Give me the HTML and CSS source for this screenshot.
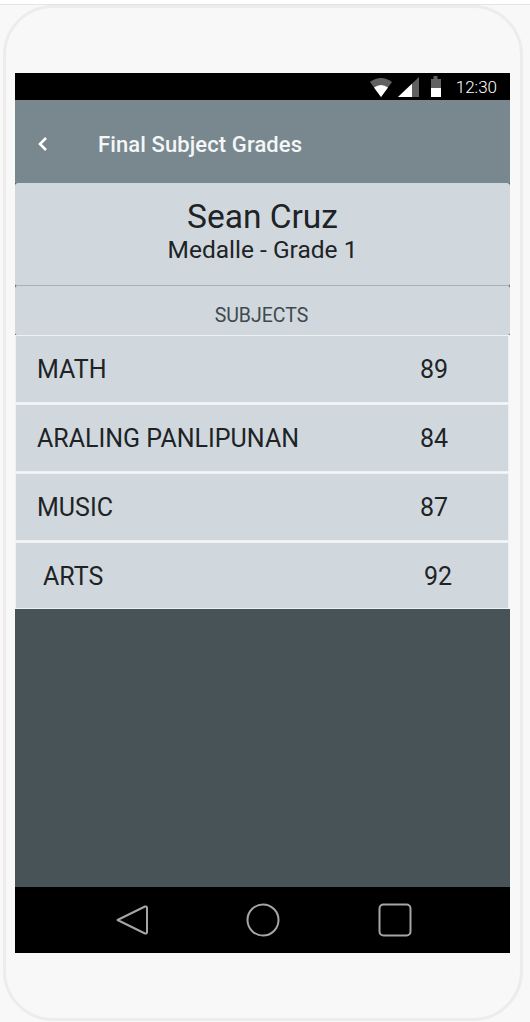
FILE: index.html
```html
<!DOCTYPE html>
<html lang="en">
<head>
	<meta charset="utf-8">
	<title>Final Subject Grades</title>
	<link rel="stylesheet" href="styles.css">
</head>
<body>

<div class="topline"></div>

<div class="phone">
	<div class="screen">
		<div class="statusbar">
			<svg class="status-icons" width="71" height="23" viewBox="0 -2 71 23">
				<!-- wifi -->
				<path d="M0 5 Q11 -3 22 5 L11 20 Z" fill="#fff" opacity="0.38"/>
				<path d="M4 10.500 Q11 5.500 18 10.500 L11 20 Z" fill="#fff"/>
				<!-- signal -->
				<path d="M28 20 L49 0 V20 Z" fill="#fff" opacity="0.38"/>
				<path d="M28 20 L42 6.700 V20 Z" fill="#fff"/>
				<!-- battery -->
				<path d="M63.500 2 V-1 H67.500 V2 H71 V20 H61 V2 Z" fill="#fff" opacity="0.38"/>
				<path d="M61 11 H71 V20 H61 Z" fill="#fff"/>
			</svg>
			<span class="clock">12:30</span>
		</div>

		<div class="toolbar">
			<svg class="back" width="12" height="16" viewBox="0 0 12 16">
				<path d="M9 2 L3 8 L9 14" fill="none" stroke="#fff" stroke-width="2.600"/>
			</svg>
			<span class="toolbar-title">Final Subject Grades</span>
		</div>

		<div class="student">
			<div class="student-name">Sean Cruz</div>
			<div class="student-class">Medalle - Grade 1</div>
		</div>

		<div class="subjects-head">SUBJECTS</div>

		<div class="grades">
			<div class="grade">
				<span class="subject">MATH</span>
				<span class="mark">89</span>
			</div>
			<div class="grade">
				<span class="subject">ARALING PANLIPUNAN</span>
				<span class="mark">84</span>
			</div>
			<div class="grade">
				<span class="subject">MUSIC</span>
				<span class="mark">87</span>
			</div>
			<div class="grade grade-arts">
				<span class="subject">ARTS</span>
				<span class="mark">92</span>
			</div>
		</div>

		<div class="empty"></div>

		<div class="navbar">
			<svg width="32" height="32" viewBox="0 0 32 32">
				<path d="M1.500 16 L29 2.500 Q31 2 31 4 V28 Q31 30 29 29.500 Z" fill="none" stroke="#a6a6a6" stroke-width="2" stroke-linejoin="round"/>
			</svg>
			<svg width="34" height="34" viewBox="0 0 34 34">
				<circle cx="17" cy="17" r="15.500" fill="none" stroke="#a6a6a6" stroke-width="2"/>
			</svg>
			<svg width="34" height="34" viewBox="0 0 34 34">
				<rect x="1.500" y="1.500" width="31" height="31" rx="4" fill="none" stroke="#a6a6a6" stroke-width="2"/>
			</svg>
		</div>
	</div>
</div>

</body>
</html>
```

FILE: styles.css
```css
body {
	margin: 0;
	height: 1022px;
	overflow: hidden;
	background-color: #f8f8f8;
	font-family: Roboto, "Liberation Sans", sans-serif;
}

.topline {
	height: 4px;
	background-color: #fff;
	border-bottom: 1px solid #e4e4e4;
}

.phone {
	box-sizing: border-box;
	width: 520px;
	height: 1016px;
	margin: 0 0 0 3px;
	padding: 65px 10px 0 9px;
	border: 3px solid #ececec;
	border-radius: 50px;
}

.screen {
	width: 495px;
	height: 880px;
	display: flex;
	flex-direction: column;
	background-color: #485358;
}

.statusbar {
	flex: 0 0 27px;
	display: flex;
	align-items: center;
	justify-content: flex-end;
	background-color: #000;
}

.status-icons {
	margin-right: 15px;
}

.clock {
	margin-right: 13px;
	color: #fff;
	font-size: 17px;
	font-weight: 300;
}

.toolbar {
	box-sizing: border-box;
	flex: 0 0 83px;
	display: flex;
	align-items: center;
	padding-top: 5px;
	background-color: #78888e;
	color: #fff;
}

.back {
	margin-left: 22px;
}

.toolbar-title {
	margin-left: 49px;
	font-size: 22px;
	letter-spacing: 0.1px;
	font-weight: 500;
	color: #f4f6f7;
}

.student {
	box-sizing: border-box;
	height: 103px;
	padding-top: 15px;
	text-align: center;
	background-color: #d0d8de;
	border-bottom: 1px solid #a9b1b7;
	border-radius: 3px 3px 2px 2px;
	color: #1e2326;
}

.student-name {
	font-size: 33.500px;
	line-height: 38px;
}

.student-class {
	font-size: 24.500px;
	line-height: 28px;
}

.subjects-head {
	box-sizing: border-box;
	height: 49px;
	padding: 17px 2px 0 0;
	text-align: center;
	font-size: 19.500px;
	line-height: 25px;
	color: #41494e;
	background-color: #d0d8de;
	border-radius: 2px;
}

.grades {
	display: flex;
	flex-direction: column;
	gap: 1px;
	background-color: #f4f6f7;
}

.grade {
	box-sizing: border-box;
	height: 68px;
	display: flex;
	align-items: center;
	padding-left: 21px;
	margin-right: 1px;
	background-color: #d0d8de;
	border: 1px solid #eef1f3;
	font-size: 25px;
	color: #1e2326;
}

.grade:last-child {
	height: 67px;
	padding-top: 1px;
}

.subject {
	width: 383px;
}

.grade-arts .subject {
	width: 381px;
	margin-left: 6px;
}

.empty {
	flex: 1;
}

.navbar {
	flex: 0 0 66px;
	display: flex;
	align-items: center;
	background-color: #000;
	padding-left: 101px;
	gap: 98px;
}
```
